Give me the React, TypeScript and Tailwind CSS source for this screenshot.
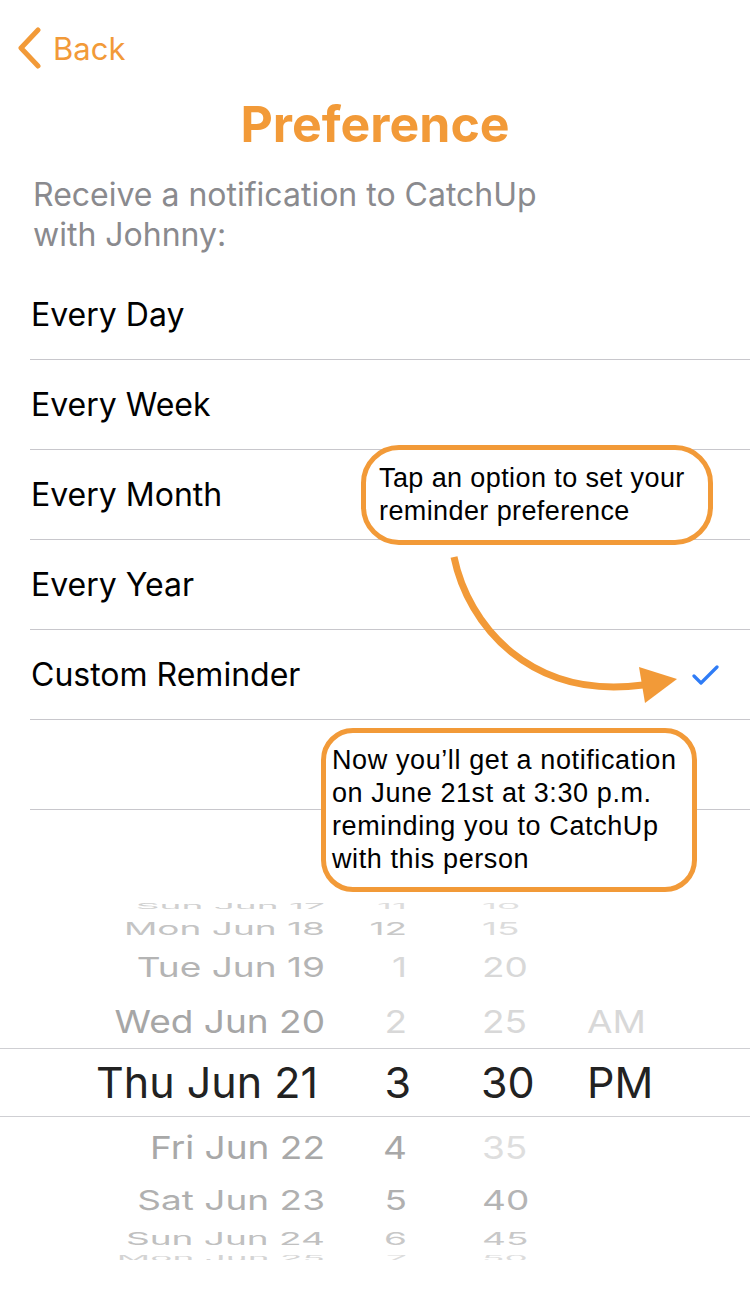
import React from 'react';

type WheelRow = {
  date: string;
  hour: string;
  min: string;
  ampm: string;
  h: string;
  scale: string;
  dc: string;
  hc: string;
  mc: string;
  ac: string;
};

const options = ['Every Day', 'Every Week', 'Every Month', 'Every Year', 'Custom Reminder', ''];

const above: WheelRow[] = [
  { date: 'Sun Jun 17', hour: '11', min: '10', ampm: '', h: 'h-[20px]', scale: 'scale-y-[0.22]', dc: 'text-[#d0d0d0]', hc: 'text-[#dcdcdc]', mc: 'text-[#e0e0e0]', ac: '' },
  { date: 'Mon Jun 18', hour: '12', min: '15', ampm: '', h: 'h-[24px]', scale: 'scale-y-[0.47]', dc: 'text-[#c4c4c4]', hc: 'text-[#c8c8c8]', mc: 'text-[#dcdcdc]', ac: '' },
  { date: 'Tue Jun 19', hour: '1', min: '20', ampm: '', h: 'h-[54px]', scale: 'scale-y-[0.72]', dc: 'text-[#b4b4b4]', hc: 'text-[#d8d8d8]', mc: 'text-[#d8d8d8]', ac: '' },
  { date: 'Wed Jun 20', hour: '2', min: '25', ampm: 'AM', h: 'h-[54px]', scale: 'scale-y-[0.86]', dc: 'text-[#a6a6a6]', hc: 'text-[#d8d8d8]', mc: 'text-[#d8d8d8]', ac: 'text-[#d8d8d8]' },
];

const below: WheelRow[] = [
  { date: 'Fri Jun 22', hour: '4', min: '35', ampm: '', h: 'h-[60px]', scale: 'scale-y-[0.86]', dc: 'text-[#a8a8a8]', hc: 'text-[#a8a8a8]', mc: 'text-[#dedede]', ac: '' },
  { date: 'Sat Jun 23', hour: '5', min: '40', ampm: '', h: 'h-[46px]', scale: 'scale-y-[0.74]', dc: 'text-[#b0b0b0]', hc: 'text-[#b0b0b0]', mc: 'text-[#b4b4b4]', ac: '' },
  { date: 'Sun Jun 24', hour: '6', min: '45', ampm: '', h: 'h-[30px]', scale: 'scale-y-[0.46]', dc: 'text-[#c0c0c0]', hc: 'text-[#c8c8c8]', mc: 'text-[#c8c8c8]', ac: '' },
  { date: 'Mon Jun 25', hour: '7', min: '50', ampm: '', h: 'h-[10px]', scale: 'scale-y-[0.2]', dc: 'text-[#d4d4d4]', hc: 'text-[#dcdcdc]', mc: 'text-[#dcdcdc]', ac: '' },
];

const Row: React.FC<{ r: WheelRow }> = ({ r }) => (
  <div className={`${r.h} flex items-center text-[37px] leading-none`}>
    <span className={`w-[325px] text-right ${r.scale} ${r.dc}`}>{r.date}</span>
    <span className={`w-[82px] text-right ${r.scale} ${r.hc}`}>{r.hour}</span>
    <span className={`ml-[75px] w-[105px] ${r.scale} ${r.mc}`}>{r.min}</span>
    <span className={`${r.scale} ${r.ac}`}>{r.ampm}</span>
  </div>
);

export default function App() {
  return (
    <div className="relative w-[750px] h-[1299px] overflow-hidden bg-white font-['Inter',sans-serif]">
      {/* nav */}
      <div className="h-[96px] flex items-center pl-[16px] text-[#F29A38]">
        <svg width="26" height="42" viewBox="0 0 26 42" className="mr-[11px]">
          <polyline points="22,3 5,21 22,39" fill="none" stroke="#F29A38" strokeWidth="5" strokeLinecap="round" strokeLinejoin="round" />
        </svg>
        <span className="text-[31px] leading-none">Back</span>
      </div>

      <h1 className="h-[56px] text-center text-[50px] leading-[56px] font-bold text-[#F29A38]">Preference</h1>

      <p className="mt-[23px] pl-[33px] text-[32px] leading-[40px] text-[#8a8a8e]">
        Receive a notification to CatchUp
        <br />
        with Johnny:
      </p>

      <div className="mt-[15px] ml-[30px]">
        {options.map((o) => (
          <div key={o || 'blank'} className="h-[90px] flex items-center justify-between border-b border-[#c8c7cc] pl-[1px] pr-[31px]">
            <span className="text-[32px] leading-none text-black">{o}</span>
            {o === 'Custom Reminder' && (
              <svg width="28" height="22" viewBox="0 0 28 22">
                <polyline points="3,12 10,19 26,3" fill="none" stroke="#2F7CF6" strokeWidth="3.2" strokeLinecap="round" strokeLinejoin="round" />
              </svg>
            )}
          </div>
        ))}
      </div>

      {/* date picker wheel */}
      <div className="mt-[93px] h-[357px] overflow-hidden">
        <div className="-mt-[7px]">
          {above.map((r) => (
            <Row key={r.date} r={r} />
          ))}
          <div className="h-[69px] flex items-center border-y border-[#cfcfd3] text-[43px] leading-none text-[#222222]">
            <span className="w-[318px] text-right">Thu Jun 21</span>
            <span className="w-[93px] text-right">3</span>
            <span className="ml-[70px] w-[106px]">30</span>
            <span>PM</span>
          </div>
          {below.map((r) => (
            <Row key={r.date} r={r} />
          ))}
        </div>
      </div>

      {/* coach marks */}
      <div className="absolute left-[361px] top-[445px] w-[352px] h-[100px] rounded-[38px] border-[5px] border-[#F29A38] bg-white pl-[13px] pt-[12px] font-['Liberation_Sans',Arial,sans-serif] text-[27px] leading-[33px] tracking-[0.4px] text-black">
        Tap an option to set your
        <br />
        reminder preference
      </div>

      <div className="absolute left-[321px] top-[728px] w-[376px] h-[164px] rounded-[32px] border-[5px] border-[#F29A38] bg-white pl-[6px] pt-[11px] font-['Liberation_Sans',Arial,sans-serif] text-[27px] leading-[33px] tracking-[0.6px] text-black">
        Now you’ll get a notification
        <br />
        on June 21st at 3:30 p.m.
        <br />
        reminding you to CatchUp
        <br />
        with this person
      </div>

      <svg className="absolute left-0 top-0 pointer-events-none" width="750" height="1299" viewBox="0 0 750 1299">
        <path d="M454 557 C 468 625, 530 700, 643 685" fill="none" stroke="#F29A38" strokeWidth="7" />
        <polygon points="639,667 677,679 645,703" fill="#F29A38" />
      </svg>
    </div>
  );
}
